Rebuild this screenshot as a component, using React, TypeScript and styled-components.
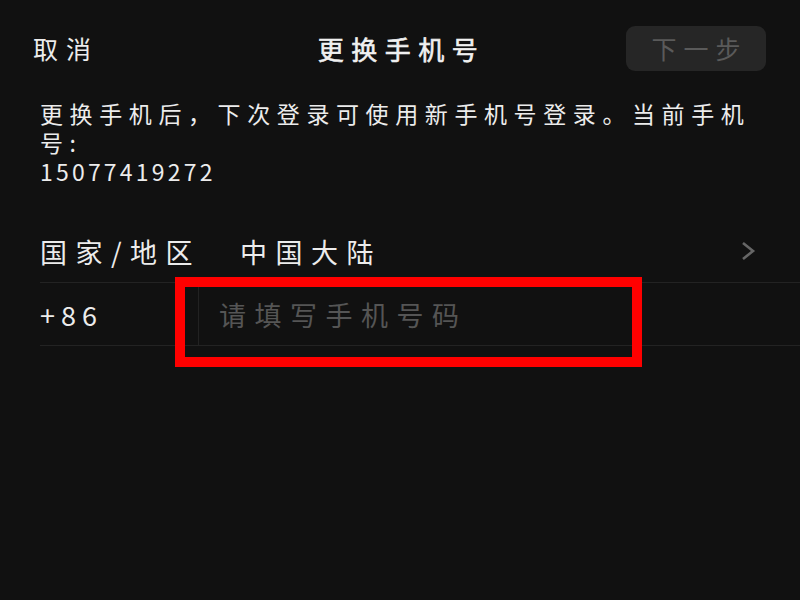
import styled, { createGlobalStyle } from 'styled-components';

const GlobalStyle = createGlobalStyle`
  html, body {
    margin: 0;
    background-color: #111111;
  }

  body {
    font-family: "Noto Sans CJK SC", "Noto Sans", sans-serif;
    color: #ececec;
  }
`;

const Page = styled.div`
  width: 800px;
  height: 600px;
  background-color: #111111;
  overflow: hidden;
`;

const Header = styled.header`
  display: grid;
  grid-template-columns: 1fr auto 1fr;
  align-items: center;
  height: 96px;
  padding: 0 34px 0 33px;
  box-sizing: border-box;
`;

const Cancel = styled.span`
  justify-self: start;
  font-size: 25px;
  letter-spacing: 8px;
`;

const Title = styled.h1`
  margin: 0 0 0 4px;
  font-size: 26px;
  font-weight: 400;
  letter-spacing: 7.5px;
  color: #f0f0f0;
  -webkit-text-stroke: 0.6px #f0f0f0;
`;

const NextButton = styled.button`
  justify-self: end;
  width: 140px;
  height: 45px;
  border: none;
  border-radius: 9px;
  background-color: #262626;
  color: #5a5a5a;
  font-family: inherit;
  font-size: 25px;
  letter-spacing: 7px;
  padding: 0 0 0 7px;
`;

const Notice = styled.p`
  width: 720px;
  margin: 3px 0 0 40px;
  font-size: 23px;
  line-height: 29px;
  letter-spacing: 6.6px;
`;

const Number = styled.span`
  letter-spacing: 3.2px;
`;

const Form = styled.div`
  margin: 34px 0 0 40px;
`;

const Row = styled.div`
  position: relative;
  display: flex;
  align-items: center;
  height: 63px;
  border-bottom: 1px solid #232323;
  box-sizing: border-box;
  font-size: 27px;
`;

const Label = styled.span<{ $width: number }>`
  flex: 0 0 ${({ $width }) => $width}px;
  letter-spacing: 8.5px;
`;

const Value = styled.span`
  flex: 1;
  letter-spacing: 8.5px;
`;

const Chevron = styled.svg`
  width: 16px;
  height: 20px;
  margin-right: 44px;
`;

const Code = styled.span`
  flex: 0 0 158px;
  letter-spacing: 6px;
`;

const PhoneInput = styled.div`
  flex: 1;
  align-self: stretch;
  display: flex;
  align-items: center;
  padding-left: 20px;
  border-left: 1px solid #222222;
  color: #555555;
  letter-spacing: 8.5px;
`;

const Highlight = styled.div`
  position: absolute;
  left: 135px;
  top: -6px;
  width: 467px;
  height: 90px;
  border: 10px solid #ff0000;
  box-sizing: border-box;
  pointer-events: none;
`;

const App = () => (
  <Page>
    <GlobalStyle />
    <Header>
      <Cancel>取消</Cancel>
      <Title>更换手机号</Title>
      <NextButton disabled>下一步</NextButton>
    </Header>
    <Notice>
      更换手机后，下次登录可使用新手机号登录。当前手机号:
      <br />
      <Number>15077419272</Number>
    </Notice>
    <Form>
      <Row>
        <Label $width={200}>国家/地区</Label>
        <Value>中国大陆</Value>
        <Chevron viewBox="0 0 16 20">
          <polyline points="3,2 13,10 3,18" fill="none" stroke="#666666" strokeWidth="2.6" />
        </Chevron>
      </Row>
      <Row>
        <Code>+86</Code>
        <PhoneInput>请填写手机号码</PhoneInput>
        <Highlight />
      </Row>
    </Form>
  </Page>
);

export default App;
